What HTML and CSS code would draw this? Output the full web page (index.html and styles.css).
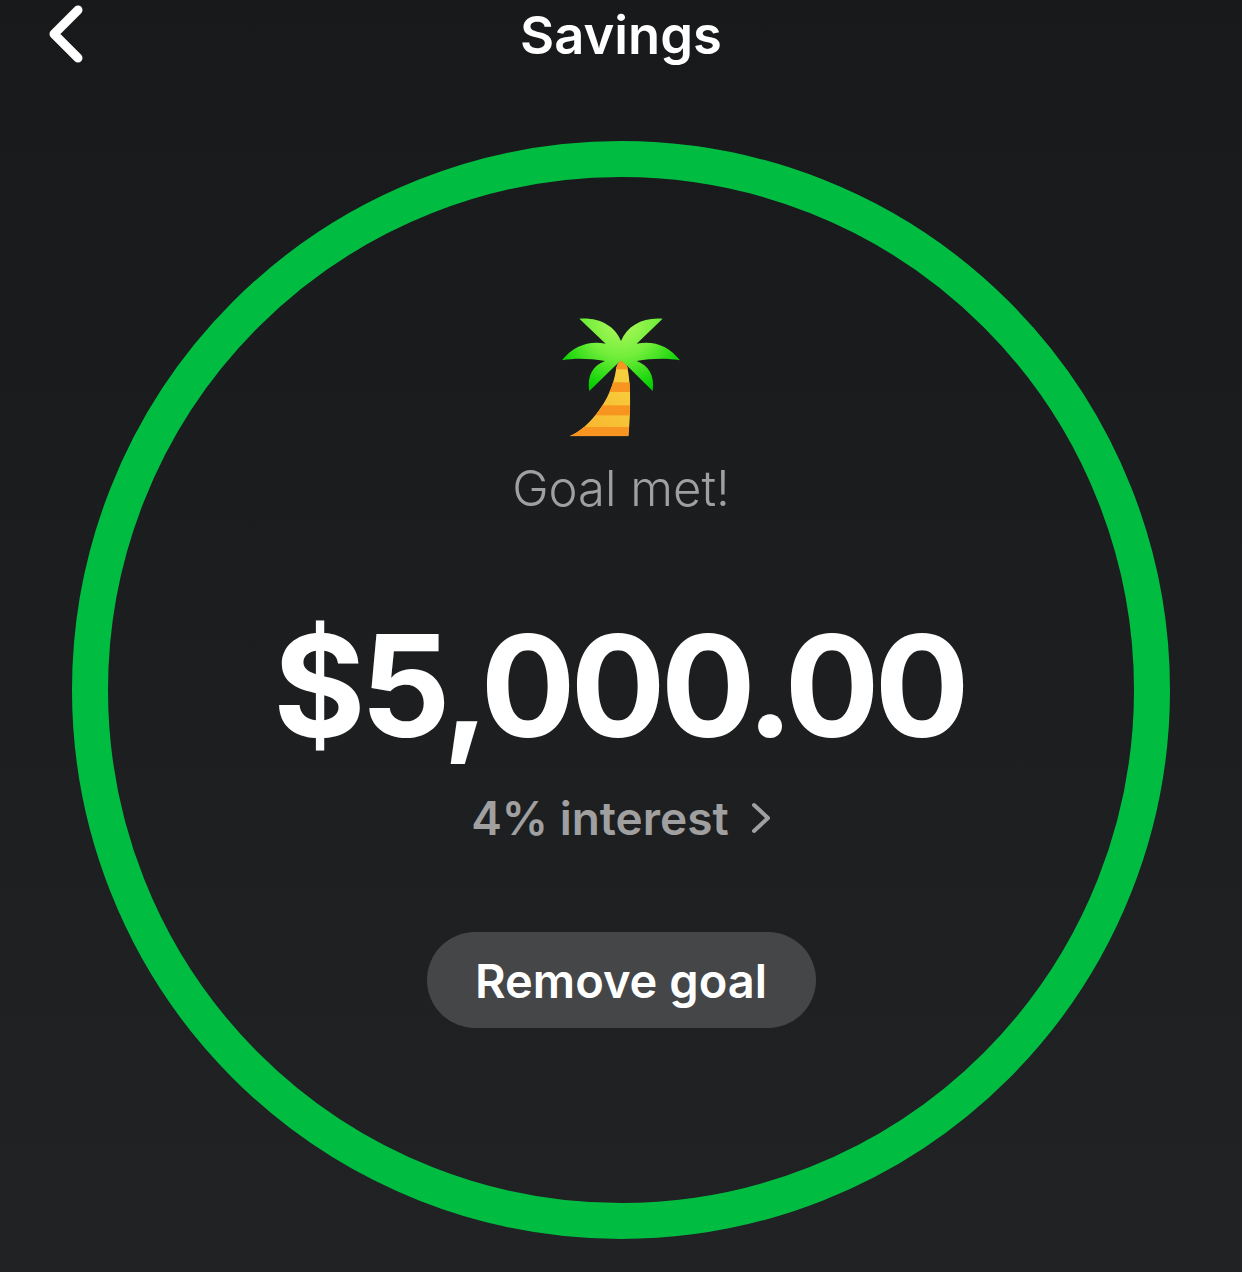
FILE: index.html
```html
<!DOCTYPE html>
<html lang="en">
<head>
  <meta charset="UTF-8">
  <meta name="viewport" content="width=device-width, initial-scale=1.0">
  <title>Savings</title>
  <link rel="stylesheet" href="styles.css">
</head>
<body>

  <div class="top-bar">
    <div class="back-btn">
      <svg width="36" height="60" viewBox="0 0 36 60">
        <path d="M30 9 L6 33 L30 57" transform="translate(0 -4)" fill="none" stroke="#fff" stroke-width="9" stroke-linecap="round" stroke-linejoin="round"/>
      </svg>
    </div>
    <h1 class="title">Savings</h1>
  </div>

  <div class="ring">
    <!-- palm tree emoji, drawn by hand -->
    <svg class="palm" width="122" height="122" viewBox="60 50 366 366">
      <defs>
        <radialGradient id="leaf" gradientUnits="userSpaceOnUse" cx="243" cy="60" r="220">
          <stop offset="0" stop-color="#b4f95f"/>
          <stop offset="0.5" stop-color="#72ee3a"/>
          <stop offset="1" stop-color="#00cf00"/>
        </radialGradient>
        <linearGradient id="bark" gradientUnits="userSpaceOnUse" x1="120" y1="400" x2="270" y2="230">
          <stop offset="0" stop-color="#f9b52e"/>
          <stop offset="1" stop-color="#f6cf3e"/>
        </linearGradient>
        <clipPath id="trunk">
          <path d="M243 178 C232 190 230 198 228 208 C214 300 150 380 88 408 L265 408 C272 340 274 260 262 200 C258 190 250 184 243 178 Z"/>
        </clipPath>
      </defs>
      <g clip-path="url(#trunk)">
        <rect x="80" y="175" width="200" height="240" fill="url(#bark)"/>
        <rect x="80" y="175" width="200" height="32" fill="#f79520"/>
        <rect x="80" y="246" width="200" height="29" fill="#f79520"/>
        <rect x="80" y="315" width="200" height="30" fill="#f79520"/>
        <rect x="80" y="380" width="200" height="30" fill="#f79520"/>
      </g>
      <path fill="url(#leaf)" d="M243 122 C262 75 310 50 368 55 L290 130 C340 120 385 135 420 180 C380 172 330 175 290 182 C325 195 345 225 338 272 L262 197 L243 180 L225 197 L148 272 C140 225 160 195 195 182 C150 175 110 172 66 180 C100 135 150 120 197 130 L118 55 C175 50 225 75 243 122 Z"/>
    </svg>
    <div class="goal-text">Goal met!</div>
    <div class="amount">$5,000.00</div>
    <div class="interest">
      <span>4% interest</span>
      <svg width="20" height="32" viewBox="0 0 20 32">
        <path d="M3 3 L17 16 L3 29" fill="none" stroke="#a0a0a0" stroke-width="4" stroke-linecap="round" stroke-linejoin="round"/>
      </svg>
    </div>
    <button class="remove-btn">Remove goal</button>
  </div>

</body>
</html>
```

FILE: styles.css
```css
body {
  font-family: Inter, 'Noto Sans', sans-serif;
  margin: 0;
  padding: 0;
  width: 1242px;
  height: 1272px;
  overflow: hidden;
  background: linear-gradient(to bottom, #18191b, #202224);
  color: #fff;
}

.top-bar {
  display: grid;
  grid-template-columns: 1fr auto 1fr;
  align-items: center;
  height: 70px;
  padding-bottom: 71px;
}

.back-btn {
  padding-left: 48px;
  display: flex;
  grid-column: 1;
  grid-row: 1;
}

.title {
  grid-column: 2;
  grid-row: 1;
  margin: 0;
  font-size: 52.5px;
  font-weight: 600;
  line-height: 70px;
}

.ring {
  box-sizing: border-box;
  width: 1098px;
  height: 1098px;
  margin: 0 auto;
  padding-top: 140px;
  border: 36px solid #00bd42;
  border-radius: 50%;
  display: flex;
  flex-direction: column;
  align-items: center;
}

.palm {
  display: block;
}

.goal-text {
  margin-top: 20px;
  font-size: 49px;
  font-weight: 300;
  line-height: 60px;
  color: #a0a0a0;
}

.amount {
  margin: 97px 4px 0 0;
  font-size: 141px;
  font-weight: 700;
  line-height: 140px;
  letter-spacing: -5px;
}

.interest {
  display: flex;
  align-items: center;
  gap: 22px;
  margin-top: 32px;
  font-size: 46px;
  font-weight: 600;
  line-height: 60px;
  color: #a0a0a0;
}

.remove-btn {
  margin-top: 84px;
  width: 389px;
  height: 96px;
  padding: 0;
  border: none;
  border-radius: 48px;
  background-color: #454648;
  color: #fff;
  font-family: inherit;
  font-size: 47px;
  font-weight: 600;
}
```
